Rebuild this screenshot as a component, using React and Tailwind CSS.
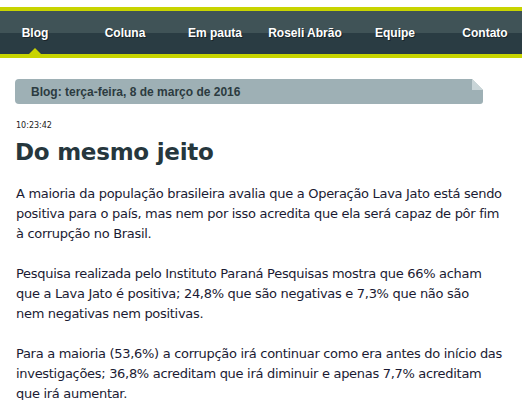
const NAV = ["Blog", "Coluna", "Em pauta", "Roseli Abrão", "Equipe", "Contato"]

const PARAS = [
  ["A maioria da população brasileira avalia que a Operação Lava Jato está sendo", "positiva para o país, mas nem por isso acredita que ela será capaz de pôr fim", "à corrupção no Brasil."],
  ["Pesquisa realizada pelo Instituto Paraná Pesquisas mostra que 66% acham", "que a Lava Jato é positiva; 24,8% que são negativas e 7,3% que não são", "nem negativas nem positivas."],
  ["Para a maioria (53,6%) a corrupção irá continuar como era antes do início das", "investigações; 36,8% acreditam que irá diminuir e apenas 7,7% acreditam", "que irá aumentar."],
]

function TopNav() {
  return (
    <nav className="overflow-hidden border-y-4 border-[#c8d400] bg-[linear-gradient(#405357_0%,#405357_51%,#2a3c43_51%,#2a3c43_100%)]">
      <ul className="ml-[-10px] flex h-[43px]">
        {NAV.map((item, i) => (
          <li key={item} className="relative flex w-[90px] shrink-0 items-center justify-center">
            <span className="text-[12px] font-bold text-white [text-shadow:1px_1px_0_#1b2428]">{item}</span>
            {i === 0 && (
              <span className="absolute bottom-0 left-1/2 -translate-x-1/2 border-x-[6px] border-b-[6px] border-x-transparent border-b-[#c8d400]" />
            )}
          </li>
        ))}
      </ul>
    </nav>
  )
}

function Crumb() {
  return (
    <div className="relative mt-[21px] flex h-[25px] w-[468px] items-center rounded-l-[4px] rounded-br-[3px] bg-[#9eb0b5] pl-[16px]">
      <span className="text-[12px] font-bold text-[#2c3b40]">Blog: terça-feira, 8 de março de 2016</span>
      <svg className="absolute right-0 top-0" width="11" height="11" viewBox="0 0 11 11">
        <path d="M0 0 L11 0 L11 11 Z" fill="#ffffff" />
        <path d="M0 0 L11 11 L0 11 Z" fill="#c9d5d8" />
      </svg>
    </div>
  )
}

export default function App() {
  return (
    <div className="min-h-[400px] bg-white pt-[7px] font-['Liberation_Sans',Arial,sans-serif]">
      <TopNav />
      <div className="px-[15px]">
        <Crumb />
        <div className="mt-[17px] pl-px font-['DejaVu_Sans',sans-serif] text-[8px] leading-[10px] text-[#222]">10:23:42</div>
        <h1 className="mt-[7px] font-['DejaVu_Sans',sans-serif] text-[23px] font-bold leading-[28px] tracking-[-0.25px] text-[#26373d]">
          Do mesmo jeito
        </h1>
        <div className="mt-[18px] pl-px font-['DejaVu_Sans',sans-serif] text-[13px] leading-[20px] tracking-[-0.3px] text-[#1b1b33]">
          {PARAS.map((lines, i) => (
            <p key={i} className="mb-[20px]">
              {lines.map((l, j) => (
                <span key={j} className="block whitespace-nowrap">{l}</span>
              ))}
            </p>
          ))}
        </div>
      </div>
    </div>
  )
}
